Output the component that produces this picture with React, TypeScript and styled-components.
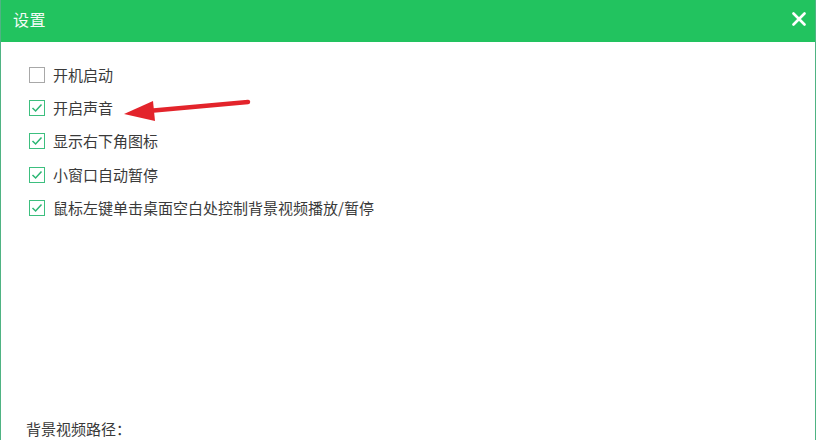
import React, { useState } from 'react';
import styled, { createGlobalStyle } from 'styled-components';

const OPTIONS = [
  { label: '开机启动', checked: false },
  { label: '开启声音', checked: true },
  { label: '显示右下角图标', checked: true },
  { label: '小窗口自动暂停', checked: true },
  { label: '鼠标左键单击桌面空白处控制背景视频播放/暂停', checked: true },
];

const GlobalStyle = createGlobalStyle`
  html, body {
    margin: 0;
    padding: 0;
    background: #fff;
  }
  body {
    font-family: "Noto Sans CJK SC", "Noto Sans", sans-serif;
  }
`;

export default function App() {
  const [options, setOptions] = useState(OPTIONS);

  function toggle(idx: number) {
    setOptions((prev) => prev.map((o, i) => (i === idx ? { ...o, checked: !o.checked } : o)));
  }

  return (
    <>
      <GlobalStyle />
      <Window>
        <Header>
          <Title>设置</Title>
          <CloseButton aria-label="关闭">
            <svg width="14" height="14" viewBox="0 0 14 14">
              <path d="M1.5 1.5 L12.5 12.5 M12.5 1.5 L1.5 12.5" stroke="#fff" strokeWidth="2.6" strokeLinecap="round" />
            </svg>
          </CloseButton>
        </Header>
        <Body>
          <OptionList>
            {options.map((opt, idx) => (
              <OptionRow key={opt.label} onClick={() => toggle(idx)}>
                <Box checked={opt.checked}>
                  {opt.checked && (
                    <svg width="12" height="10" viewBox="0 0 12 10">
                      <path d="M1.5 5 L4.6 8 L10.5 1.5" fill="none" stroke="#2bb673" strokeWidth="1.5" />
                    </svg>
                  )}
                </Box>
                <OptionLabel>{opt.label}</OptionLabel>
              </OptionRow>
            ))}
          </OptionList>
          <PathLabel>背景视频路径：</PathLabel>
          <Arrow width="130" height="26" viewBox="0 0 130 26">
            <path d="M124 4 L24 13" stroke="#e3242b" strokeWidth="4.5" strokeLinecap="round" />
            <polygon points="0,16 29,3 31,23" fill="#e3242b" />
          </Arrow>
        </Body>
      </Window>
    </>
  );
}

const Window = styled.div`
  width: 816px;
  height: 440px;
  box-sizing: border-box;
  border-left: 1px solid #4fb383;
  border-right: 1px solid #4fb383;
  display: flex;
  flex-direction: column;
  overflow: hidden;
  background: #fff;
`;

const Header = styled.div`
  height: 42px;
  flex: 0 0 42px;
  background: #22c35f;
  display: flex;
  align-items: center;
  justify-content: space-between;
  padding: 0 9px 4px 12px;
  box-sizing: border-box;
`;

const Title = styled.div`
  color: #fff;
  font-size: 16px;
  line-height: 20px;
  letter-spacing: 0.5px;
  opacity: 0.95;
`;

const CloseButton = styled.div`
  width: 14px;
  height: 14px;
  display: flex;
  cursor: pointer;
`;

const Body = styled.div`
  position: relative;
  flex: 1;
  display: flex;
  flex-direction: column;
  justify-content: space-between;
  padding: 16px 0 0 26px;
`;

const OptionList = styled.div`
  display: flex;
  flex-direction: column;
`;

const OptionRow = styled.div`
  display: flex;
  align-items: center;
  height: 33.3px;
  gap: 8px;
  cursor: pointer;
`;

const Box = styled.div<{ checked: boolean }>`
  width: 16px;
  height: 16px;
  box-sizing: border-box;
  border: 1px solid ${(p) => (p.checked ? '#3dbf7f' : '#a8a8a8')};
  background: #fff;
  display: flex;
  align-items: center;
  justify-content: center;
  margin-left: 2px;
`;

const OptionLabel = styled.span`
  font-size: 15px;
  color: #3a3a3a;
  line-height: 20px;
`;

const PathLabel = styled.div`
  font-size: 15px;
  color: #3a3a3a;
  line-height: 20px;
  margin-bottom: 1px;
  margin-left: -1px;
`;

const Arrow = styled.svg`
  position: absolute;
  left: 123px;
  top: 56px;
`;
